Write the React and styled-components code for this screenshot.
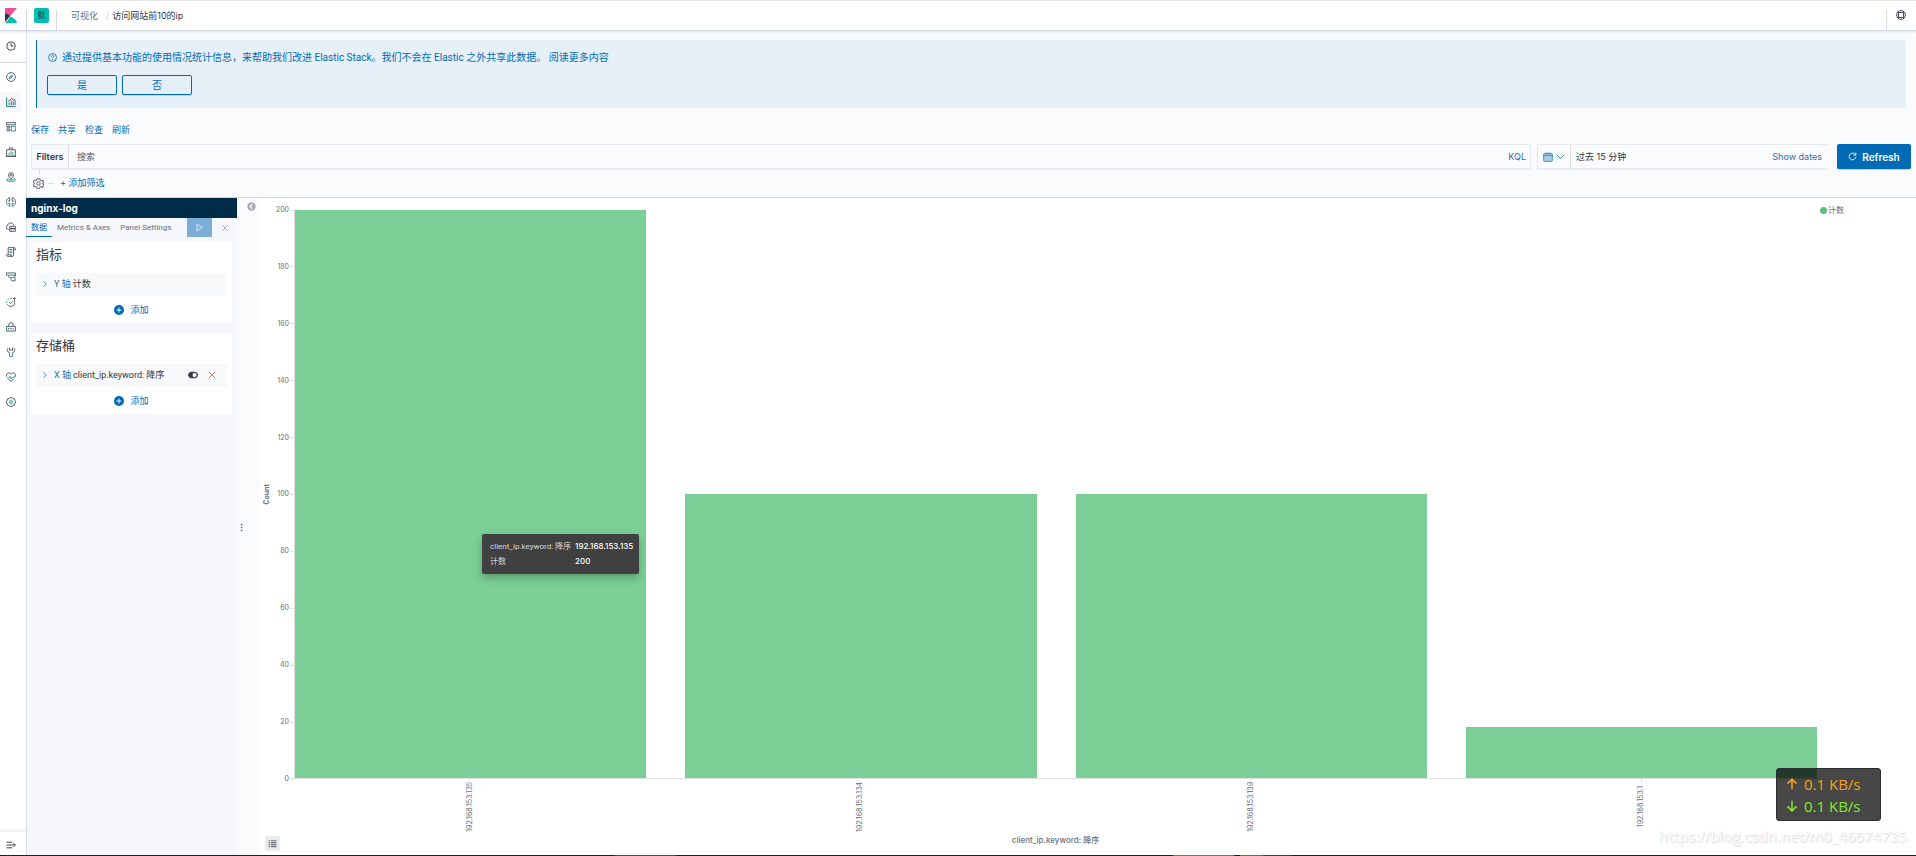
import React, { useState } from 'react';
import styled, { createGlobalStyle } from 'styled-components';

const GlobalStyle = createGlobalStyle`
  * {
    box-sizing: border-box;
  }
  body {
    margin: 0;
    background: #fafbfd;
    color: #343741;
    font-family: Inter, "Noto Sans CJK SC", sans-serif;
    font-size: 9px;
    line-height: 14px;
  }
  button, input {
    font: inherit;
    color: inherit;
    margin: 0;
    padding: 0;
    border: 0;
    background: none;
  }
  button {
    cursor: pointer;
  }
  a {
    color: #006bb4;
    text-decoration: none;
  }
  h1, h2, p {
    margin: 0;
  }
  svg {
    display: block;
    flex: none;
  }
`;

const DARK = '#343741';
const TEAL = '#017d73';

// narrower face for the small dense labels
const NARROW = 'Roboto, "Noto Sans CJK SC", sans-serif';

const navIcons = [
  {
    name: 'Discover',
    art: (
      <>
        <circle cx="16" cy="16" r="14" />
        <path stroke={TEAL} fill="#8fd0ca" strokeWidth="2" d="M22 10l-4 9-8 3 3-8z" />
      </>
    ),
  },
  {
    name: 'Visualize',
    art: (
      <>
        <path stroke={TEAL} strokeWidth="3" d="M2 1v29h29" />
        <path d="M10 26v-9M17 26V12M23 26V15M29 26V11" />
        <path d="M7 13l5-2 6-7 5 6 7-1" />
      </>
    ),
  },
  {
    name: 'Dashboard',
    art: (
      <>
        <path d="M1 2h30v7H1zM1 14h11v5H1M1 28h11v-5" />
        <path stroke={TEAL} d="M17 14h13v15H17zM2 23h9" />
      </>
    ),
  },
  {
    name: 'Canvas',
    art: (
      <>
        <path d="M2 9h28v20H2zM11 8V3h10v5M0 30h32" />
        <path stroke={TEAL} d="M10 25v-7M16 25V14M22 25v-9" />
      </>
    ),
  },
  {
    name: 'Maps',
    art: (
      <>
        <path d="M16 22c-5-5-8-8-8-12a8 8 0 0116 0c0 4-3 7-8 12z" />
        <circle cx="16" cy="10" r="3" />
        <path stroke={TEAL} d="M7 19l-5 8c4 2 8 3 14 3s10-1 14-3l-5-8M8 25h16" />
      </>
    ),
  },
  {
    name: 'Machine Learning',
    art: (
      <>
        <path d="M12 2C7 3 3 7 2 12M20 2c5 1 9 5 10 10M12 2v11H7M20 2v11h5" />
        <path stroke={TEAL} d="M12 30C7 29 3 25 2 20M20 30c5-1 9-5 10-10M2 12v8M30 12v8" />
        <path d="M12 30V20H7M20 30V20h5" />
      </>
    ),
  },
  {
    name: 'Metrics',
    art: (
      <>
        <path d="M9 23H6a5 5 0 01-1-10C5 6 10 3 15 3c5 0 9 3 10 8" />
        <path d="M12 14h18v7H12zM12 22h18v8H12z" />
        <path stroke={TEAL} d="M17 18h2M17 26h2" />
      </>
    ),
  },
  {
    name: 'Logs',
    art: (
      <>
        <path d="M7 23V2h20c3 0 3 5 3 7h-6M24 4v21c0 3-1 5-4 5H6c-3 0-4-3-4-5h15c0 3 1 5 3 5" />
        <path stroke={TEAL} d="M11 8h9M11 13h9M11 18h9" />
      </>
    ),
  },
  {
    name: 'APM',
    art: (
      <>
        <path d="M5 11H1V3h29v8h-3M16 20v4c0 3 2 4 5 4h8v-8" />
        <path stroke={TEAL} d="M8 10h21v8H11c-3 0-3-3-3-8z" />
      </>
    ),
  },
  {
    name: 'Uptime',
    art: (
      <>
        <path d="M19 4h-5M9 6L5 9M28 15c1 8-4 14-12 15-4 0-7-1-9-3" />
        <path stroke={TEAL} d="M2 14v5M4 23l2 3M9 16l5 5 9-9" />
        <path d="M27 14V2M23 6l4-4 4 4" />
      </>
    ),
  },
  {
    name: 'SIEM',
    art: (
      <>
        <path d="M9 13V9a7 7 0 0114 0v4M2 14h28v15H2z" />
        <path stroke={TEAL} d="M8 19v5M13 19v5M18 19v5M23 19v5" />
      </>
    ),
  },
  {
    name: 'Dev Tools',
    art: (
      <>
        <path d="M11 2v8h10V2M6 4c-4 5-2 12 5 15M26 4c4 5 2 12-5 15" />
        <path stroke={TEAL} d="M11 18v12h10V18" />
      </>
    ),
  },
  {
    name: 'Stack Monitoring',
    art: (
      <>
        <path d="M2 15C0 8 4 3 9 3c3 0 5 1 7 4 2-3 4-4 7-4 5 0 9 5 7 12M10 25l6 5 6-5" />
        <path stroke={TEAL} d="M4 19h6l3-5 4 8 4-6h9M5 21l4 4M27 21l-4 4" />
      </>
    ),
  },
  {
    name: 'Management',
    art: (
      <>
        <path d="M12 2h8l2 3 5 1 2 6 2 4-2 4-2 6-5 1-2 3h-8l-2-3-5-1-2-6-2-4 2-4 2-6 5-1z" />
        <circle cx="16" cy="16" r="6" stroke="#5fb8b0" fill="#8fd0ca" />
      </>
    ),
  },
];

const bars = [
  { ip: '192.168.153.135', count: 200 },
  { ip: '192.168.153.134', count: 100 },
  { ip: '192.168.153.139', count: 100 },
  { ip: '192.168.153.1', count: 18 },
];

const yTicks = [200, 180, 160, 140, 120, 100, 80, 60, 40, 20, 0];

const Icon = ({ size = 10, color = DARK, stroke = 2, children }) => (
  <svg
    width={size}
    height={size}
    viewBox="0 0 32 32"
    fill="none"
    stroke={color}
    strokeWidth={stroke}
    aria-hidden="true"
  >
    {children}
  </svg>
);

const ChevronRight = () => (
  <Icon size={8} color="#4a90c8" stroke={4}>
    <path d="M10 5l11 11-11 11" />
  </Icon>
);

const PlusCircle = () => (
  <Icon size={10} color="#fff" stroke={3}>
    <circle cx="16" cy="16" r="16" fill="#006bb4" stroke="none" />
    <path d="M16 8v16M8 16h16" />
  </Icon>
);

const Gear = () => (
  <Icon size={11} color="#69707d" stroke={3}>
    <path d="M12 2h8l1 4 4 2 4-1 2 7-3 2 3 4-3 7-4-2-4 2-1 4h-7l-1-4-4-2-4 1-2-7 3-3-3-4 3-6 4 1 4-2z" />
    <circle cx="16" cy="16" r="5" />
  </Icon>
);

const Header = () => (
  <TopBar>
    <LogoLink href="#home" aria-label="Kibana">
      <svg width="12" height="15" viewBox="0 0 24 30">
        <path fill="#f04e98" d="M0 0h24L0 28z" />
        <path fill="#343741" d="M0 10v18l10-12C7 13 4 11 0 10z" />
        <path fill="#00bfb3" d="M11 17L1 30h23c-1-6-6-10-13-13z" />
      </svg>
    </LogoLink>
    <SpaceCell>
      <SpaceButton>默</SpaceButton>
    </SpaceCell>
    <Breadcrumbs>
      <Crumb href="#visualize">可视化</Crumb>
      <Slash>/</Slash>
      <span>访问网站前10的ip</span>
    </Breadcrumbs>
    <HelpButton aria-label="Help">
      <Icon stroke={3}>
        <circle cx="16" cy="16" r="14" />
        <rect x="8" y="8" width="16" height="16" rx="4" />
        <path d="M8 4v6M24 4v6M8 22v6M24 22v6" />
      </Icon>
    </HelpButton>
  </TopBar>
);

const SideNav = () => (
  <Nav>
    <RecentBox>
      <NavButton aria-label="Recent">
        <Icon stroke={3}>
          <circle cx="16" cy="16" r="13" />
          <path d="M16 7v9h8" />
        </Icon>
      </NavButton>
    </RecentBox>
    <NavList>
      {navIcons.map((item) => (
        <NavButton key={item.name} aria-label={item.name} $active={item.name === 'Visualize'}>
          <Icon stroke={2.500}>{item.art}</Icon>
        </NavButton>
      ))}
    </NavList>
    <ExpandBox>
      <NavButton aria-label="Expand">
        <Icon stroke={3}>
          <path d="M2 7h18M2 16h26M2 25h18M24 10l6 6-6 6" />
        </Icon>
      </NavButton>
    </ExpandBox>
  </Nav>
);

const TelemetryCallout = () => (
  <Callout>
    <CalloutTitle>
      <Icon size={9} color="#006bb4" stroke={3}>
        <circle cx="16" cy="16" r="14" />
        <path d="M12 13c0-6 8-6 8-1 0 3-4 3-4 6M16 21v3" />
      </Icon>
      <p>
        通过提供基本功能的使用情况统计信息，来帮助我们改进 Elastic Stack。我们不会在 Elastic 之外共享此数据。{' '}
        <a href="#more">阅读更多内容</a>
      </p>
    </CalloutTitle>
    <CalloutActions>
      <OutlineButton>是</OutlineButton>
      <OutlineButton>否</OutlineButton>
    </CalloutActions>
  </Callout>
);

const QueryBar = () => {
  const [query, setQuery] = useState('');

  return (
    <QueryRow>
      <SearchGroup>
        <FiltersButton>Filters</FiltersButton>
        <SearchInput
          type="text"
          aria-label="搜索"
          placeholder="搜索"
          value={query}
          onChange={(event) => setQuery(event.target.value)}
        />
        <KqlButton>KQL</KqlButton>
      </SearchGroup>
      <DateGroup>
        <QuickButton aria-label="Quick select">
          <Icon size={10} color="#4a90c8" stroke={3}>
            <rect x="2" y="5" width="28" height="25" rx="3" fill="#a9cbe6" />
            <path d="M9 1v7M16 1v7M23 1v7M2 11h28" />
          </Icon>
          <Icon size={9} color="#006bb4" stroke={3}>
            <path d="M3 10l13 13 13-13" />
          </Icon>
        </QuickButton>
        <DateButton>过去 15 分钟</DateButton>
        <ShowDates>Show dates</ShowDates>
      </DateGroup>
      <RefreshButton>
        <Icon size={9} color="#fff" stroke={3}>
          <path d="M28 17a12 12 0 11-4-10l4 3M28 2v9h-9" />
        </Icon>
        Refresh
      </RefreshButton>
    </QueryRow>
  );
};

const Editor = () => (
  <EditorPanel>
    <EditorTitle>nginx-log</EditorTitle>
    <Tabs>
      <Tab $active>数据</Tab>
      <Tab>Metrics &amp; Axes</Tab>
      <Tab>Panel Settings</Tab>
      <PlayButton aria-label="Apply changes">
        <Icon size={9} color="#e3eef7" stroke={3}>
          <path d="M7 4l20 12L7 28z" />
        </Icon>
      </PlayButton>
      <DiscardButton aria-label="Discard changes">
        <Icon size={8} color="#98a2b3" stroke={3}>
          <path d="M4 4l24 24M28 4L4 28" />
        </Icon>
      </DiscardButton>
    </Tabs>
    <Card>
      <CardTitle>指标</CardTitle>
      <AggRow>
        <ChevronRight />
        <AggLabel><b>Y 轴</b> 计数</AggLabel>
      </AggRow>
      <AddButton><PlusCircle />添加</AddButton>
    </Card>
    <Card>
      <CardTitle>存储桶</CardTitle>
      <AggRow>
        <ChevronRight />
        <AggLabel><b>X 轴</b> client_ip.keyword: 降序</AggLabel>
        <AggAction aria-label="Disable">
          <Icon size={10} color="#343741" stroke={3}>
            <rect x="2" y="7" width="28" height="18" rx="9" fill="#343741" />
            <circle cx="21" cy="16" r="8" fill="#fff" />
          </Icon>
        </AggAction>
        <AggAction aria-label="Remove">
          <Icon size={8} color="#d0524e" stroke={3}>
            <path d="M3 3l26 26M29 3L3 29" />
          </Icon>
        </AggAction>
      </AggRow>
      <AddButton><PlusCircle />添加</AddButton>
    </Card>
  </EditorPanel>
);

const Chart = () => (
  <ChartPanel>
    <YTitle>Count</YTitle>
    <YAxis>
      {yTicks.map((tick) => (
        <YTick key={tick}>{tick}</YTick>
      ))}
    </YAxis>
    <Plot>
      {bars.map((bar) => (
        <Bar key={bar.ip} style={{ height: `${bar.count / 2}%` }} />
      ))}
      <ChartTooltip>
        <tbody>
          <tr>
            <th>client_ip.keyword: 降序</th>
            <td>192.168.153.135</td>
          </tr>
          <tr>
            <th>计数</th>
            <td>200</td>
          </tr>
        </tbody>
      </ChartTooltip>
    </Plot>
    <Legend>
      <LegendDot />
      计数
    </Legend>
    <XAxis>
      {bars.map((bar) => (
        <XTick key={bar.ip}>
          <span>{bar.ip}</span>
        </XTick>
      ))}
    </XAxis>
    <XTitle>client_ip.keyword: 降序</XTitle>
    <LegendToggle aria-label="Toggle legend">
      <Icon size={9} color="#69707d" stroke={4}>
        <path d="M2 6h5M10 6h20M2 13h5M10 13h20M2 20h5M10 20h20M2 27h5M10 27h20" />
      </Icon>
    </LegendToggle>
  </ChartPanel>
);

const App = () => (
  <>
    <GlobalStyle />
    <Page>
      <Header />
      <Body>
        <SideNav />
        <Main>
          <TelemetryCallout />
          <TopMenu>
            <a href="#save">保存</a>
            <a href="#share">共享</a>
            <a href="#inspect">检查</a>
            <a href="#reload">刷新</a>
          </TopMenu>
          <QueryBar />
          <FilterBar>
            <GearButton aria-label="Filter options"><Gear /></GearButton>
            <FilterDash />
            <AddFilter>+ 添加筛选</AddFilter>
          </FilterBar>
          <Workspace>
            <Editor />
            <Resizer>
              <CollapseButton aria-label="Collapse editor">
                <Icon size={9} color="#fff" stroke={4}>
                  <circle cx="16" cy="16" r="15" fill="#a6abb5" stroke="none" />
                  <path d="M19 8l-8 8 8 8" />
                </Icon>
              </CollapseButton>
              <Handle>⋮</Handle>
            </Resizer>
            <Chart />
          </Workspace>
        </Main>
      </Body>
      <TaskStrip>
        <StripGap $grow={615} />
        <StripMark $grow={61} $color="#4c4d50" />
        <StripGap $grow={497} />
        <StripMark $grow={61} $color="#a0643c" />
        <StripGap $grow={6} />
        <StripMark $grow={23} $color="#6b6e34" />
        <StripMark $grow={28} $color="#3c3e42" />
        <StripGap $grow={625} />
      </TaskStrip>
      <Watermark>https://blog.csdn.net/m0_46674735</Watermark>
      <SpeedWidget>
        <Speed $color="#f7a11b">
          <Icon size={12} color="#f7a11b" stroke={4}>
            <path d="M16 30V4M4 15L16 3l12 12" />
          </Icon>
          0.1 KB/s
        </Speed>
        <Speed $color="#86ea2c">
          <Icon size={12} color="#86ea2c" stroke={4}>
            <path d="M16 2v26M4 17l12 12 12-12" />
          </Icon>
          0.1 KB/s
        </Speed>
      </SpeedWidget>
    </Page>
  </>
);

const Page = styled.div`
  position: relative;
  display: flex;
  flex-direction: column;
  min-height: 100vh;
`;

const TopBar = styled.header`
  display: flex;
  height: 31px;
  background: #fff;
  border-top: 1px solid #e4e4e4;
  border-bottom: 1px solid #d3dae6;
  box-shadow: 0 1px 2px rgba(152, 162, 179, 0.3);
  z-index: 1;
`;

const LogoLink = styled.a`
  width: 26px;
  padding: 7px 0 0 5px;
`;

const SpaceCell = styled.div`
  width: 31px;
  height: 20px;
  margin-top: 9px;
  border: solid #d3dae6;
  border-width: 0 1px;
`;

const SpaceButton = styled.button`
  display: block;
  width: 15px;
  height: 15px;
  margin: -2px 0 0 7px;
  border-radius: 2px;
  background: #00bfb3;
  font-size: 8px;
  line-height: 15px;
`;

const Breadcrumbs = styled.nav`
  display: flex;
  align-items: center;
  flex: 1;
  padding-left: 14px;
`;

const Crumb = styled.a`
  color: #69707d;
`;

const Slash = styled.span`
  padding: 0 3px 0 8px;
  color: #c2c8d4;
`;

const HelpButton = styled.button`
  display: flex;
  width: 30px;
  height: 20px;
  margin-top: 9px;
  padding-left: 9px;
  border-left: 1px solid #d3dae6;
`;

const Body = styled.div`
  display: flex;
  flex: 1;
`;

const Nav = styled.nav`
  display: flex;
  flex-direction: column;
  width: 27px;
  flex: none;
  background: #fff;
  border-right: 1px solid #dfe3ec;
`;

const RecentBox = styled.div`
  height: 32px;
  padding: 5px 0 0 1px;
  border-bottom: 1px solid #d3dae6;
`;

const NavList = styled.div`
  display: flex;
  flex-direction: column;
  gap: 5px;
  flex: 1;
  padding: 4px 0 0 1px;
`;

const NavButton = styled.button`
  display: flex;
  align-items: center;
  justify-content: center;
  width: 20px;
  height: 20px;
  border-radius: 2px;
  background: ${({ $active }) => ($active ? '#f5f7fa' : 'transparent')};
`;

const ExpandBox = styled.div`
  height: 24px;
  padding: 3px 0 0 1px;
  border-top: 1px solid #eef0f4;
  box-shadow: 0 -1px 4px rgba(152, 162, 179, 0.2);
`;

const Main = styled.main`
  display: flex;
  flex-direction: column;
  flex: 1;
  min-width: 0;
`;

const Callout = styled.section`
  margin: 9px 10px 0 9px;
  padding: 10px;
  height: 68px;
  background: #e6f0f8;
  border-left: 1px solid #006bb4;
  color: #006bb4;
`;

const CalloutTitle = styled.div`
  display: flex;
  align-items: center;
  gap: 5px;
  height: 15px;
  padding-left: 1px;
  font-family: ${NARROW};
  font-size: 10px;
`;

const CalloutActions = styled.div`
  display: flex;
  gap: 5px;
  margin-top: 10px;
`;

const OutlineButton = styled.button`
  width: 70px;
  height: 20px;
  border: 1px solid #006bb4;
  border-radius: 2px;
  box-shadow: 0 1px 1px rgba(0, 107, 180, 0.2);
  font-size: 10px;
  color: #006bb4;
`;

const TopMenu = styled.nav`
  display: flex;
  gap: 9px;
  padding: 15px 4px 7px;
`;

const QueryRow = styled.div`
  display: flex;
  height: 25px;
  padding: 0 5px 0 4px;
`;

const SearchGroup = styled.div`
  display: flex;
  flex: 1;
  border: 1px solid #e6e9f0;
  box-shadow: 0 1px 1px rgba(152, 162, 179, 0.1);
`;

const FiltersButton = styled.button`
  width: 37px;
  background: #f8f9fc;
  border-right: 1px solid #dcdfe6;
  font-weight: 600;
`;

const SearchInput = styled.input`
  flex: 1;
  padding: 0 8px;
  outline: none;
  &::placeholder {
    color: #535966;
    opacity: 1;
  }
`;

const KqlButton = styled.button`
  padding: 0 4px;
  color: #2f6fae;
`;

const DateGroup = styled.div`
  display: flex;
  width: 290px;
  margin-left: 6px;
  border: 1px solid #e6e9f0;
  border-right: 0;
  box-shadow: 0 1px 1px rgba(152, 162, 179, 0.1);
`;

const QuickButton = styled.button`
  display: flex;
  align-items: center;
  justify-content: center;
  gap: 3px;
  width: 33px;
  border-right: 1px solid #dcdfe6;
`;

const DateButton = styled.button`
  flex: 1;
  padding-left: 5px;
  text-align: left;
`;

const ShowDates = styled.button`
  padding-right: 5px;
  color: #2f6fae;
`;

const RefreshButton = styled.button`
  display: flex;
  align-items: center;
  justify-content: center;
  gap: 5px;
  width: 74px;
  margin-left: 10px;
  background: #006bb4;
  border-radius: 2px;
  box-shadow: 0 1px 1px rgba(0, 107, 180, 0.3);
  color: #fff;
  font-size: 10px;
  font-weight: 600;
`;

const FilterBar = styled.div`
  display: flex;
  align-items: center;
  height: 29px;
  padding-left: 6px;
  border-bottom: 1px solid #d3dae6;
`;

const GearButton = styled.button`
  position: relative;
  &::before {
    content: '';
    position: absolute;
    left: 6px;
    top: -9px;
    height: 5px;
    border-left: 1px solid #dcdfe6;
  }
`;

const FilterDash = styled.span`
  width: 6px;
  margin: 0 6px 0 4px;
  border-top: 1px solid #dcdfe6;
`;

const AddFilter = styled.button`
  color: #006bb4;
`;

const Workspace = styled.div`
  display: flex;
  flex: 1;
`;

const EditorPanel = styled.aside`
  width: 210px;
  flex: none;
  background: #f5f7fa;
`;

const EditorTitle = styled.h1`
  height: 20px;
  margin-left: -1px;
  padding-left: 5px;
  background: #002b49;
  color: #fff;
  font-size: 10px;
  font-weight: 700;
  line-height: 21px;
`;

const Tabs = styled.div`
  display: flex;
  height: 19px;
  margin-left: -1px;
  font-family: ${NARROW};
  font-size: 8px;
`;

const Tab = styled.button`
  padding: 1px 5px 0;
  border-bottom: 1px solid ${({ $active }) => ($active ? '#006bb4' : 'transparent')};
  color: ${({ $active }) => ($active ? '#006bb4' : '#69707d')};
`;

const PlayButton = styled.button`
  display: flex;
  align-items: center;
  justify-content: center;
  width: 25px;
  margin-left: auto;
  background: #7aaed6;
`;

const DiscardButton = styled.button`
  display: flex;
  align-items: center;
  justify-content: center;
  width: 25px;
`;

const Card = styled.section`
  height: 81px;
  margin: 5px 5px 10px 4px;
  padding: 5px;
  background: #fff;
  border-radius: 2px;
`;

const CardTitle = styled.h2`
  font-size: 13px;
  font-weight: 400;
  line-height: 14px;
`;

const AggRow = styled.div`
  display: flex;
  align-items: center;
  height: 23px;
  margin-top: 12px;
  padding: 0 6px 1px 5px;
  background: #f7f9fb;
  border-radius: 2px;
`;

const AggLabel = styled.span`
  flex: 1;
  padding-left: 5px;
  font-family: ${NARROW};
  b {
    color: #2f6fae;
    font-weight: 400;
  }
`;

const AggAction = styled.button`
  display: flex;
  align-items: center;
  justify-content: center;
  width: 19px;
  height: 14px;
`;

const AddButton = styled.button`
  display: flex;
  align-items: center;
  gap: 6px;
  margin: 7px auto 0;
  color: #006bb4;
`;

const Resizer = styled.div`
  display: flex;
  flex-direction: column;
  width: 23px;
  flex: none;
  padding-bottom: 10px;
  background: #fafbfd;
`;

const CollapseButton = styled.button`
  align-self: flex-end;
  padding: 4px 4px 0 0;
`;

const Handle = styled.span`
  margin: auto 0;
  color: #1d5f94;
  font-weight: 700;
`;

const ChartPanel = styled.section`
  position: relative;
  display: grid;
  grid-template-columns: 14px 20px 1fr 99px;
  grid-template-rows: 1fr 53px 23px;
  flex: 1;
  padding-top: 12px;
  background: #fff;
  font-size: 7px;
  line-height: 8px;
  color: #69707d;
`;

const YTitle = styled.div`
  align-self: center;
  justify-self: center;
  writing-mode: vertical-rl;
  transform: rotate(180deg);
  font-weight: 700;
`;

const YAxis = styled.div`
  display: flex;
  flex-direction: column;
  justify-content: space-between;
  margin: -4px 0;
`;

const YTick = styled.div`
  display: flex;
  align-items: center;
  justify-content: flex-end;
  gap: 1px;
  &::after {
    content: '';
    width: 4px;
    border-top: 1px solid #e0e0e0;
  }
`;

const Plot = styled.div`
  position: relative;
  display: flex;
  align-items: flex-end;
  gap: 39px;
  border-left: 1px solid #e0e0e0;
  border-bottom: 1px solid #e0e0e0;
`;

const Bar = styled.div`
  flex: 1;
  background: #7bcf96;
`;

const ChartTooltip = styled.table`
  position: absolute;
  left: 187px;
  top: 57%;
  padding: 5px 4px 5px 6px;
  background: #404040;
  border-radius: 2px;
  box-shadow: 0 4px 8px rgba(0, 0, 0, 0.25);
  border-spacing: 2px 0;
  color: #fff;
  font-size: 8px;
  line-height: 15px;
  white-space: nowrap;
  th {
    padding: 0 2px 0 0;
    color: #d6d6d6;
    font-family: ${NARROW};
    font-weight: 400;
    text-align: left;
  }
  td {
    padding: 0;
    font-weight: 500;
  }
`;

const Legend = styled.div`
  display: flex;
  align-items: center;
  align-self: start;
  gap: 1px;
  height: 8px;
  margin-top: -4px;
  padding-left: 3px;
  font-size: 8px;
`;

const LegendDot = styled.span`
  width: 7px;
  height: 7px;
  border-radius: 50%;
  background: #57c17b;
`;

const XAxis = styled.div`
  display: flex;
  grid-column: 3;
  gap: 39px;
`;

const XTick = styled.div`
  display: flex;
  flex-direction: column;
  align-items: center;
  gap: 3px;
  flex: 1;
  &::before {
    content: '';
    height: 4px;
    border-left: 1px solid #e0e0e0;
  }
  span {
    writing-mode: vertical-rl;
    transform: rotate(180deg);
  }
`;

const XTitle = styled.div`
  grid-column: 3;
  padding-top: 4px;
  text-align: center;
  font-size: 8px;
  font-weight: 500;
`;

const LegendToggle = styled.button`
  position: absolute;
  left: 5px;
  bottom: 4px;
  display: flex;
  align-items: center;
  justify-content: center;
  width: 15px;
  height: 15px;
  border-radius: 2px;
  background: #e9eaec;
`;

const TaskStrip = styled.footer`
  display: flex;
  height: 1px;
  background: #1d1f23;
`;

const StripGap = styled.span`
  flex: ${({ $grow }) => $grow};
`;

const StripMark = styled.span`
  flex: ${({ $grow }) => $grow};
  background: ${({ $color }) => $color};
`;

const Watermark = styled.div`
  position: absolute;
  right: 9px;
  bottom: 10px;
  color: #fff;
  font-family: "Open Sans", sans-serif;
  font-size: 15px;
  line-height: 20px;
  text-shadow: 0 0 1px #d0d0d0, 1px 1px 1px #dedede;
`;

const SpeedWidget = styled.div`
  position: absolute;
  right: 35px;
  bottom: 35px;
  width: 105px;
  padding: 4px 9px 3px;
  border: 1px solid #2e2e2e;
  border-radius: 3px;
  background: rgba(0, 0, 0, 0.72);
`;

const Speed = styled.div`
  display: flex;
  align-items: center;
  gap: 6px;
  height: 22px;
  color: ${({ $color }) => $color};
  font-family: "Open Sans", sans-serif;
  font-size: 15px;
`;

export default App;
